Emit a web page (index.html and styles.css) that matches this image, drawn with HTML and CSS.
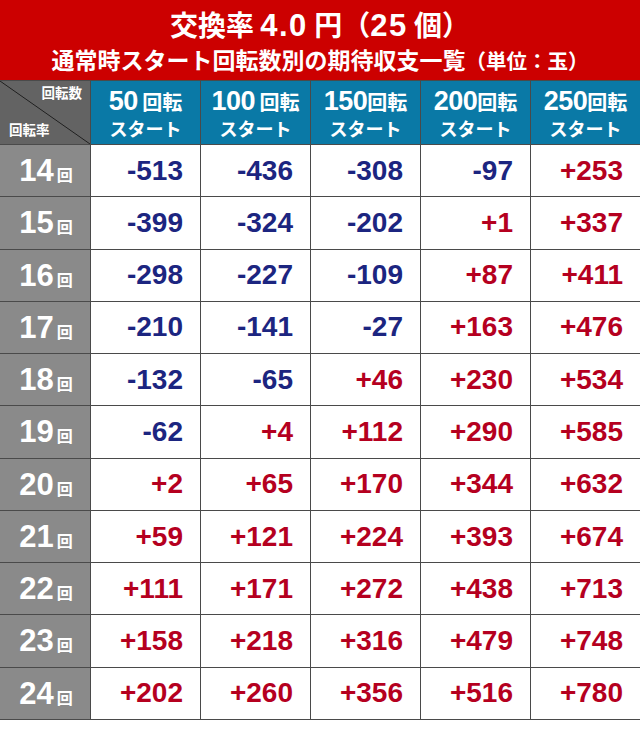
FILE: index.html
```html
<!DOCTYPE html>
<html lang="ja">
<head>
<meta charset="utf-8">
<link rel="stylesheet" href="styles.css">
</head>
<body>
<div class="page">
  <header class="title">
    <div class="t1">交換率 <span class="td">4.0</span> 円（<span class="td">25</span> 個）</div>
    <div class="t2">通常時スタート回転数別の期待収支一覧<span class="unit">（単位：玉）</span></div>
  </header>
  <div class="grid">
    <div class="corner"><span class="c-top">回転数</span><span class="c-bot">回転率</span></div>
    <div class="hd"><div class="l1"><span class="hn">50</span> 回転</div><div class="l2">スタート</div></div>
    <div class="hd"><div class="l1"><span class="hn">100</span> 回転</div><div class="l2">スタート</div></div>
    <div class="hd"><div class="l1"><span class="hn">150</span>回転</div><div class="l2">スタート</div></div>
    <div class="hd"><div class="l1"><span class="hn">200</span>回転</div><div class="l2">スタート</div></div>
    <div class="hd"><div class="l1"><span class="hn">250</span>回転</div><div class="l2">スタート</div></div>

    <div class="rl"><span class="rn">14</span><span class="rk">回</span></div>
    <div class="v neg">-513</div><div class="v neg">-436</div><div class="v neg">-308</div><div class="v neg">-97</div><div class="v pos">+253</div>

    <div class="rl"><span class="rn">15</span><span class="rk">回</span></div>
    <div class="v neg">-399</div><div class="v neg">-324</div><div class="v neg">-202</div><div class="v pos">+1</div><div class="v pos">+337</div>

    <div class="rl"><span class="rn">16</span><span class="rk">回</span></div>
    <div class="v neg">-298</div><div class="v neg">-227</div><div class="v neg">-109</div><div class="v pos">+87</div><div class="v pos">+411</div>

    <div class="rl"><span class="rn">17</span><span class="rk">回</span></div>
    <div class="v neg">-210</div><div class="v neg">-141</div><div class="v neg">-27</div><div class="v pos">+163</div><div class="v pos">+476</div>

    <div class="rl"><span class="rn">18</span><span class="rk">回</span></div>
    <div class="v neg">-132</div><div class="v neg">-65</div><div class="v pos">+46</div><div class="v pos">+230</div><div class="v pos">+534</div>

    <div class="rl"><span class="rn">19</span><span class="rk">回</span></div>
    <div class="v neg">-62</div><div class="v pos">+4</div><div class="v pos">+112</div><div class="v pos">+290</div><div class="v pos">+585</div>

    <div class="rl"><span class="rn">20</span><span class="rk">回</span></div>
    <div class="v pos">+2</div><div class="v pos">+65</div><div class="v pos">+170</div><div class="v pos">+344</div><div class="v pos">+632</div>

    <div class="rl"><span class="rn">21</span><span class="rk">回</span></div>
    <div class="v pos">+59</div><div class="v pos">+121</div><div class="v pos">+224</div><div class="v pos">+393</div><div class="v pos">+674</div>

    <div class="rl"><span class="rn">22</span><span class="rk">回</span></div>
    <div class="v pos">+111</div><div class="v pos">+171</div><div class="v pos">+272</div><div class="v pos">+438</div><div class="v pos">+713</div>

    <div class="rl"><span class="rn">23</span><span class="rk">回</span></div>
    <div class="v pos">+158</div><div class="v pos">+218</div><div class="v pos">+316</div><div class="v pos">+479</div><div class="v pos">+748</div>

    <div class="rl"><span class="rn">24</span><span class="rk">回</span></div>
    <div class="v pos">+202</div><div class="v pos">+260</div><div class="v pos">+356</div><div class="v pos">+516</div><div class="v pos">+780</div>
  </div>
</div>
</body>
</html>
```

FILE: styles.css
```css
* { box-sizing: border-box; margin: 0; padding: 0; }
html, body { background: #fff; }
body {
  width: 640px;
  font-family: "Liberation Sans", "Noto Sans CJK JP", sans-serif;
}
.page { width: 640px; }

.title {
  height: 80px;
  background: #cc0000;
  color: #fff;
  display: flex;
  flex-direction: column;
  align-items: center;
  padding-top: 7px;
  font-family: "Noto Sans CJK JP", sans-serif;
  font-weight: 700;
}
.t1 { font-size: 28px; line-height: 34px; white-space: nowrap; }
.td { font-family: "Liberation Sans", sans-serif; font-size: 31px; letter-spacing: 1.5px; }
.t2 { font-size: 23px; line-height: 32px; white-space: nowrap; }
.unit { font-size: 20.5px; }

.grid {
  display: grid;
  grid-template-columns: 90px repeat(5, 1fr);
  grid-template-rows: 63px repeat(11, 1fr);
  gap: 1px;
  height: 640px;
  background: #4a4a4a;
  border-top: 1px solid #4a4a4a;
  border-bottom: 1px solid #4a4a4a;
}

.corner {
  background:
    linear-gradient(to top right, transparent calc(50% - 0.8px), #1e1e1e 50%, transparent calc(50% + 0.8px)),
    #636363;
  color: #fff;
  font-family: "Noto Sans CJK JP", sans-serif;
  font-weight: 700;
  font-size: 13.5px;
  display: flex;
  flex-direction: column;
  justify-content: space-between;
  padding: 2px 8px 6px 9px;
}
.c-top { align-self: flex-end; line-height: 18px; }
.c-bot { align-self: flex-start; line-height: 18px; }

.hd {
  background: #0a79a6;
  color: #fff;
  display: flex;
  flex-direction: column;
  align-items: center;
  justify-content: center;
  font-family: "Noto Sans CJK JP", sans-serif;
  font-weight: 700;
  padding-top: 2px;
}
.l1 { font-size: 20px; line-height: 28px; white-space: nowrap; }
.hn { font-family: "Liberation Sans", sans-serif; font-size: 27px; letter-spacing: -0.5px; }
.l2 { font-size: 18px; line-height: 24px; }

.rl {
  background: #8a8a8a;
  color: #fff;
  display: flex;
  align-items: baseline;
  justify-content: center;
  padding-top: 10px;
  padding-left: 2px;
  font-weight: 700;
}
.rn { font-size: 31px; line-height: 32px; }
.rk { font-family: "Noto Sans CJK JP", sans-serif; font-size: 16px; margin-left: 3px; }

.v {
  background: #fff;
  display: flex;
  align-items: center;
  justify-content: flex-end;
  padding-right: 17px;
  font-weight: 700;
  font-size: 28px;
}
.neg { color: #1c2580; }
.pos { color: #b5001f; }
```
